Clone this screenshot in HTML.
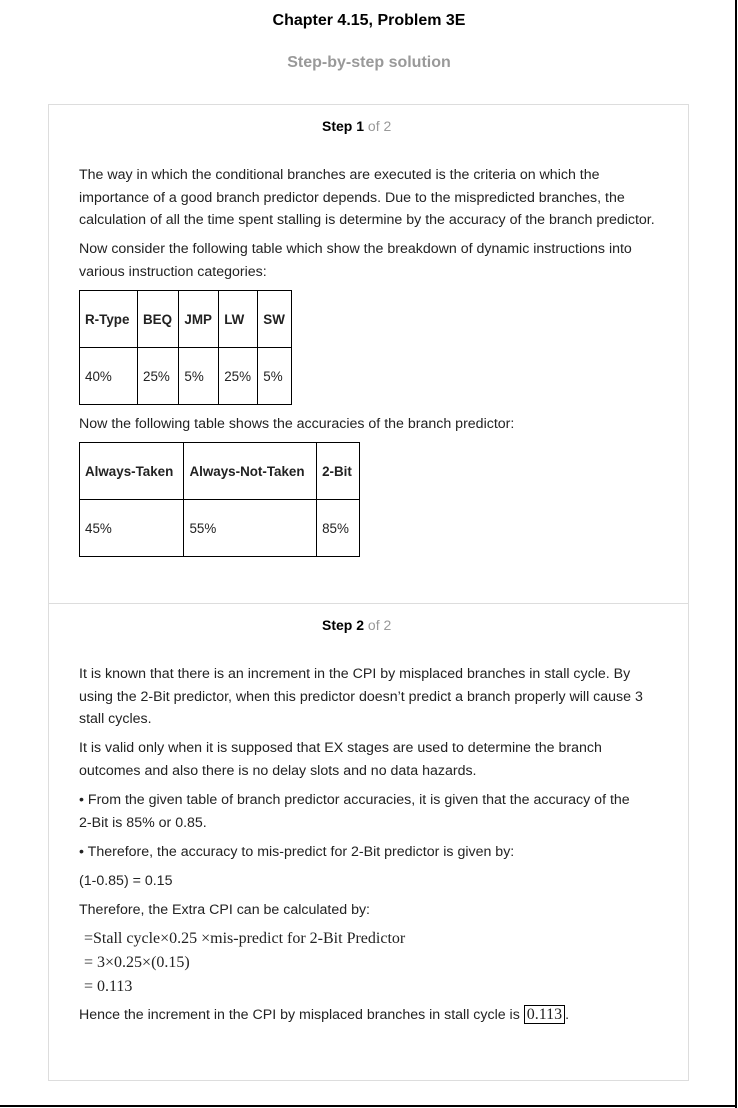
<!DOCTYPE html>
<html><head><meta charset="utf-8"><style>
body{margin:0;width:738px;height:1108px;background:#fff;position:relative;overflow:hidden;font-family:"Liberation Sans",Arial,sans-serif;color:#222}
.a{position:absolute;white-space:nowrap;line-height:20px;font-size:14.2px}
.c{left:0;width:738px;text-align:center}
.box{position:absolute;left:48px;top:104px;width:639px;height:975px;border:1px solid #ddd}
.div{position:absolute;left:49px;top:603px;width:639px;height:1px;background:#ddd}
.t{position:absolute;border-collapse:collapse;font-size:13.4px}
.t td{border:1px solid #000;padding:0 5px;height:56px}
.t th{border:1px solid #000;padding:0 5px;height:56px;text-align:left}
.m{font-family:"Liberation Serif",serif;font-size:16px;color:#222}
</style></head><body>
<div style="position:absolute;left:735px;top:0;width:2px;height:1108px;background:#000"></div>
<div style="position:absolute;left:0;top:1105px;width:737px;height:2px;background:#000"></div>
<div class="a c" style="top:11px;font-size:16px;font-weight:bold;color:#000">Chapter 4.15, Problem 3E</div>
<div class="a c" style="top:53px;font-size:16px;font-weight:bold;color:#999">Step-by-step solution</div>
<div class="box"></div><div class="div"></div>
<div class="a" style="left:322px;top:116px;font-size:14px"><b style="color:#000">Step 1</b> <span style="color:#999">of 2</span></div>
<div class="a" style="left:79px;top:165px">The way in which the conditional branches are executed is the criteria on which the</div>
<div class="a" style="left:79px;top:188px">importance of a good branch predictor depends. Due to the mispredicted branches, the</div>
<div class="a" style="left:79px;top:210px">calculation of all the time spent stalling is determine by the accuracy of the branch predictor.</div>
<div class="a" style="left:79px;top:239px">Now consider the following table which show the breakdown of dynamic instructions into</div>
<div class="a" style="left:79px;top:262px">various instruction categories:</div>
<table class="t" style="left:79px;top:290px;width:213px"><tr><th style="width:47px">R-Type</th><th>BEQ</th><th>JMP</th><th>LW</th><th>SW</th></tr><tr><td>40%</td><td>25%</td><td>5%</td><td>25%</td><td>5%</td></tr></table>
<div class="a" style="left:79px;top:414px">Now the following table shows the accuracies of the branch predictor:</div>
<table class="t" style="left:79px;top:442px;width:281px"><tr><th>Always-Taken</th><th>Always-Not-Taken</th><th>2-Bit</th></tr><tr><td>45%</td><td>55%</td><td>85%</td></tr></table>
<div class="a" style="left:322px;top:615px;font-size:14px"><b style="color:#000">Step 2</b> <span style="color:#999">of 2</span></div>
<div class="a" style="left:79px;top:664px">It is known that there is an increment in the CPI by misplaced branches in stall cycle. By</div>
<div class="a" style="left:79px;top:687px">using the 2-Bit predictor, when this predictor doesn’t predict a branch properly will cause 3</div>
<div class="a" style="left:79px;top:709px">stall cycles.</div>
<div class="a" style="left:79px;top:738px">It is valid only when it is supposed that EX stages are used to determine the branch</div>
<div class="a" style="left:79px;top:761px">outcomes and also there is no delay slots and no data hazards.</div>
<div class="a" style="left:79px;top:790px">• From the given table of branch predictor accuracies, it is given that the accuracy of the</div>
<div class="a" style="left:79px;top:813px">2-Bit is 85% or 0.85.</div>
<div class="a" style="left:79px;top:842px">• Therefore, the accuracy to mis-predict for 2-Bit predictor is given by:</div>
<div class="a" style="left:79px;top:871px">(1-0.85) = 0.15</div>
<div class="a" style="left:79px;top:900px">Therefore, the Extra CPI can be calculated by:</div>
<div class="a m" style="left:84px;top:929px">=Stall cycle×0.25 ×mis-predict for 2-Bit Predictor</div>
<div class="a m" style="left:84px;top:953px">= 3×0.25×(0.15)</div>
<div class="a m" style="left:84px;top:977px">= 0.113</div>
<div class="a" style="left:79px;top:1005px">Hence the increment in the CPI by misplaced branches in stall cycle is <span class="m" style="border:1px solid #000;padding:0 2px">0.113</span>.</div>
</body></html>
